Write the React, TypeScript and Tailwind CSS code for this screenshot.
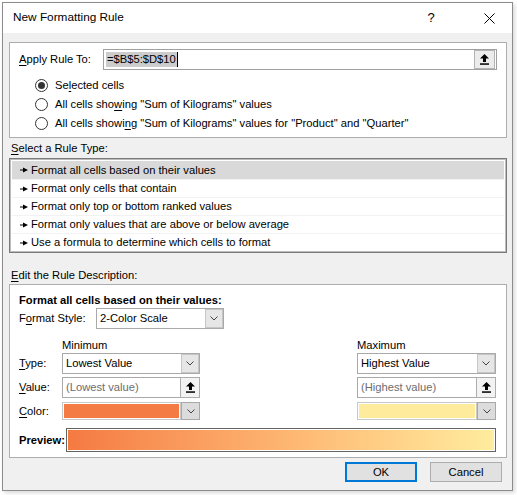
import React from "react";

const font = { fontFamily: '"Liberation Sans", Arial, sans-serif' };

function U({ children }: { children: React.ReactNode }) {
  return <span className="underline underline-offset-2 decoration-1">{children}</span>;
}

function Chevron() {
  return (
    <svg width="8" height="5" viewBox="0 0 8 5">
      <polyline points="0.5,0.5 4,4 7.5,0.5" fill="none" stroke="#444" strokeWidth="1" />
    </svg>
  );
}

function UploadIcon() {
  return (
    <svg width="9" height="11" viewBox="0 0 9 11">
      <polygon points="4.5,0 9,4.5 6,4.5 6,8 3,8 3,4.5 0,4.5" fill="#000" />
      <rect x="0" y="9.3" width="9" height="1.5" fill="#000" />
    </svg>
  );
}

function Pointer() {
  return (
    <svg width="8" height="6" viewBox="0 0 8 6">
      <rect x="0" y="2.5" width="4" height="1" fill="#000" />
      <polygon points="3,0.5 8,3 3,5.5" fill="#000" />
    </svg>
  );
}

function Radio({ checked }: { checked?: boolean }) {
  return (
    <div className="w-[13px] h-[13px] rounded-full border border-[#333] bg-white flex items-center justify-center">
      {checked && <div className="w-[7px] h-[7px] rounded-full bg-[#333]" />}
    </div>
  );
}

function Dropdown({ text, width }: { text: string; width: string }) {
  return (
    <div className={`${width} h-[21px] border border-[#a9a9a9] bg-white flex items-center`}>
      <span className="flex-1 pl-[3px] leading-none">{text}</span>
      <div className="w-[18px] h-[19px] border border-[#c6c6c6] bg-[#e6e6e6] flex items-center justify-center">
        <Chevron />
      </div>
    </div>
  );
}

function ValueBox({ text, width }: { text: string; width: string }) {
  return (
    <div className={`${width} h-[21px] border border-[#a9a9a9] bg-white flex items-center`}>
      <span className="flex-1 pl-[3px] leading-none text-[#6d6d6d]">{text}</span>
      <div className="w-[20px] h-[21px] -mr-px border border-[#adadad] bg-[#f3f3f3] flex items-center justify-center">
        <UploadIcon />
      </div>
    </div>
  );
}

function ColorBox({ color, width }: { color: string; width: string }) {
  return (
    <div className={`${width} h-[18px] flex`}>
      <div className="flex-1 border border-[#c8c8c8] p-px bg-white">
        <div className="w-full h-full" style={{ background: color }} />
      </div>
      <div className="w-[19px] h-[18px] border border-[#a9a9a9] bg-[#dcdcdc] flex items-center justify-center">
        <Chevron />
      </div>
    </div>
  );
}

export default function App() {
  const items = [
    "Format all cells based on their values",
    "Format only cells that contain",
    "Format only top or bottom ranked values",
    "Format only values that are above or below average",
    "Use a formula to determine which cells to format",
  ];
  return (
    <div className="w-[517px] h-[495px] bg-white pt-[2px] pl-[2px] text-black text-[11.2px]" style={font}>
      <div className="w-[511px] h-[489px] border border-[#8c8c8c] bg-[#f0f0f0] flex flex-col shadow-[2px_2px_4px_rgba(0,0,0,0.15)]">
        {/* Title bar */}
        <div className="h-[30px] bg-white flex items-center pl-[10px] shrink-0">
          <span className="flex-1 text-[11.8px]">New Formatting Rule</span>
          <span className="w-[20px] text-center text-[13px] mr-[25px]">?</span>
          <div className="w-[46px] h-[30px] flex items-center justify-center">
            <svg width="11" height="11" viewBox="0 0 11 11">
              <line x1="0.5" y1="0.5" x2="10.5" y2="10.5" stroke="#000" strokeWidth="1" />
              <line x1="10.5" y1="0.5" x2="0.5" y2="10.5" stroke="#000" strokeWidth="1" />
            </svg>
          </div>
        </div>

        {/* Body */}
        <div className="flex-1 pt-[9px] pl-[6px] pr-[5px] flex flex-col">
          {/* Apply rule to */}
          <div className="w-[498px] h-[96px] border border-[#adadad] bg-white pl-[9px] pt-[6px] flex flex-col">
            <div className="flex items-center h-[21px]">
              <span className="w-[84px]">
                <U>A</U>pply Rule To:
              </span>
              <div className="w-[394px] h-[21px] border border-[#a0a0a0] bg-white flex items-center">
                <div className="flex-1 pl-[2px] flex items-center">
                  <span className="bg-[#cccccc] px-px leading-[15px]">=$B$5:$D$10</span>
                  <span className="w-px h-[15px] bg-black" />
                </div>
                <div className="w-[21px] h-[19px] border border-[#b4b4b4] bg-[#ececec] flex items-center justify-center mr-px">
                  <UploadIcon />
                </div>
              </div>
            </div>
            <div className="mt-[6px] flex flex-col">
              <div className="h-[19px] flex items-center pl-[16px] gap-[7px]">
                <Radio checked />
                <span>
                  Se<U>l</U>ected cells
                </span>
              </div>
              <div className="h-[19px] flex items-center pl-[16px] gap-[7px]">
                <Radio />
                <span>
                  All cells sho<U>w</U>ing "Sum of Kilograms" values
                </span>
              </div>
              <div className="h-[19px] flex items-center pl-[16px] gap-[7px]">
                <Radio />
                <span>
                  All cells showi<U>n</U>g "Sum of Kilograms" values for "Product" and "Quarter"
                </span>
              </div>
            </div>
          </div>

          {/* Select a rule type */}
          <div className="h-[20px] flex items-center pl-[2px]">
            <span>
              <U>S</U>elect a Rule Type:
            </span>
          </div>
          <div className="w-[498px] h-[95px] border border-[#7a7a7a] shrink-0">
            <div className="w-full h-full border border-[#bcbcbc] bg-white pt-px px-px">
              {items.map((t, i) => (
                <div
                  key={t}
                  className={`h-[18px] flex items-center pl-[8px] gap-[3px] ${
                    i === 0 ? "bg-[#d9d9d9]" : "border-t border-[#f2f2f2]"
                  }`}
                >
                  <Pointer />
                  <span>{t}</span>
                </div>
              ))}
            </div>
          </div>

          {/* Edit the rule description */}
          <div className="mt-[13px] h-[18px] flex items-center pl-[2px]">
            <span>
              <U>E</U>dit the Rule Description:
            </span>
          </div>
          <div className="w-[498px] h-[174px] border border-[#adadad] bg-white pl-[9px] pr-[10px] pt-[7px] flex flex-col">
            <div className="h-[16px] flex items-center font-bold">Format all cells based on their values:</div>
            <div className="h-[21px] flex items-center">
              <span className="w-[77px]">
                F<U>o</U>rmat Style:
              </span>
              <Dropdown text="2-Color Scale" width="w-[128px]" />
            </div>
            <div className="mt-[8px] h-[16px] flex items-center">
              <span className="w-[43px]" />
              <span className="flex-1">Minimum</span>
              <span className="w-[139px]">Maximum</span>
            </div>
            <div className="h-[21px] flex items-center">
              <span className="w-[43px]">
                <U>T</U>ype:
              </span>
              <Dropdown text="Lowest Value" width="w-[138px]" />
              <span className="flex-1" />
              <Dropdown text="Highest Value" width="w-[139px]" />
            </div>
            <div className="mt-[3px] h-[21px] flex items-center">
              <span className="w-[43px]">
                <U>V</U>alue:
              </span>
              <ValueBox text="(Lowest value)" width="w-[138px]" />
              <span className="flex-1" />
              <ValueBox text="(Highest value)" width="w-[139px]" />
            </div>
            <div className="mt-[4px] h-[18px] flex items-center">
              <span className="w-[43px]">
                <U>C</U>olor:
              </span>
              <ColorBox color="#f47c44" width="w-[138px]" />
              <span className="flex-1" />
              <ColorBox color="#ffeb9c" width="w-[139px]" />
            </div>
            <div className="mt-[8px] h-[24px] flex items-center">
              <span className="w-[47px] font-bold">Preview:</span>
              <div className="flex-1 h-[24px] border border-[#646464] bg-white p-px">
                <div className="w-full h-full bg-gradient-to-r from-[#f47a42] to-[#ffec9e]" />
              </div>
            </div>
          </div>

          {/* Buttons */}
          <div className="mt-[4px] h-[20px] flex justify-end gap-[13px] pr-[5px]">
            <div className="w-[72px] h-[20px] border-2 border-[#0078d7] bg-[#e1e1e1] flex items-center justify-center">
              OK
            </div>
            <div className="w-[72px] h-[20px] border border-[#adadad] bg-[#e1e1e1] flex items-center justify-center">
              Cancel
            </div>
          </div>
        </div>
      </div>
    </div>
  );
}
